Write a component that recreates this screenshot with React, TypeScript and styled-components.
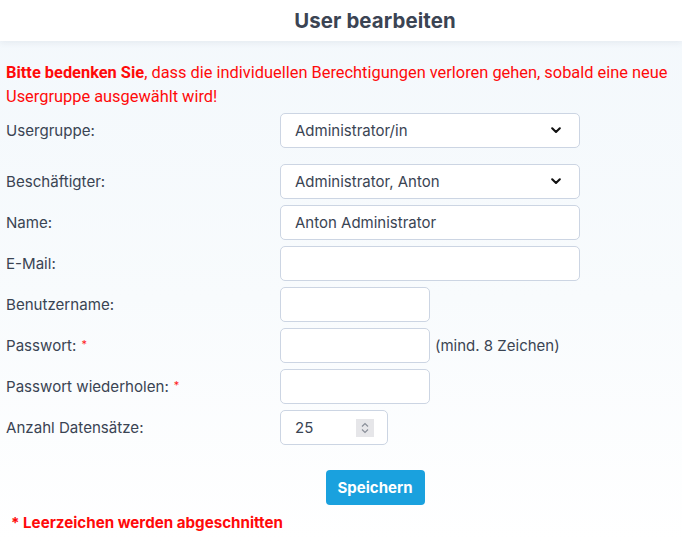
import React from "react";
import styled, { createGlobalStyle } from "styled-components";

const Global = createGlobalStyle`
  html, body { margin: 0; padding: 0; }
  body {
    font-family: Inter, "Noto Sans", sans-serif;
    background: #ffffff;
    width: 682px;
    height: 541px;
    overflow: hidden;
  }
`;

const Page = styled.div`
  width: 682px;
  min-height: 541px;
  background: linear-gradient(180deg, #f3f8fc 0%, #f8fbfd 55%, #ffffff 100%);
`;

const Header = styled.header`
  height: 41px;
  background: #ffffff;
  box-shadow: 0 2px 6px rgba(60, 80, 100, 0.08);
  display: flex;
  align-items: center;
  justify-content: center;
  padding-left: 68px;
  box-sizing: border-box;
`;

const Title = styled.h1`
  margin: 0;
  font-size: 20.4px;
  font-weight: 700;
  color: #3b4453;
  letter-spacing: 0.1px;
`;

const Content = styled.main`
  padding: 20px 6px 0 6px;
`;

const Warning = styled.p`
  margin: 0 0 4px 0;
  font-family: Roboto, sans-serif;
  font-size: 16.4px;
  line-height: 24px;
  color: #ff0a0a;
  strong { font-weight: 700; }
`;

const Form = styled.form`
  display: flex;
  flex-direction: column;
  gap: 6px;
`;

const Row = styled.div<{ $extra?: number }>`
  display: grid;
  grid-template-columns: 274px auto;
  align-items: center;
  margin-bottom: ${(p) => p.$extra ?? 0}px;
`;

const Label = styled.label`
  font-size: 15.1px;
  color: #3a4453;
  display: flex;
  align-items: center;
  gap: 5px;
`;

const Req = styled.span`
  color: #ff1a1a;
  font-size: 11px;
  position: relative;
  top: -2px;
`;

const Field = styled.div`
  display: flex;
  align-items: center;
  gap: 5px;
`;

const Input = styled.input<{ $w: number }>`
  width: ${(p) => p.$w}px;
  height: 35px;
  box-sizing: border-box;
  border: 1px solid #ccd5e3;
  border-radius: 5px;
  background: #ffffff;
  padding: 0 14px;
  font-family: Inter, sans-serif;
  font-size: 15px;
  color: #3a4453;
  outline: none;
`;

const SelectBox = styled.div`
  width: 300px;
  height: 35px;
  box-sizing: border-box;
  border: 1px solid #ccd5e3;
  border-radius: 5px;
  background: #ffffff;
  padding: 0 18px 0 14px;
  display: flex;
  align-items: center;
  justify-content: space-between;
  font-size: 15px;
  color: #3a4453;
`;

const Hint = styled.span`
  font-size: 15px;
  color: #3a4453;
`;

const NumberBox = styled.div`
  width: 108px;
  height: 35px;
  box-sizing: border-box;
  border: 1px solid #ccd5e3;
  border-radius: 5px;
  background: #ffffff;
  padding: 0 13px 0 14px;
  display: flex;
  align-items: center;
  justify-content: space-between;
  font-size: 15px;
  color: #3a4453;
`;

const Spinner = styled.span`
  width: 18px;
  height: 18px;
  background: #e6e6e9;
  display: flex;
  align-items: center;
  justify-content: center;
`;

const ButtonRow = styled.div`
  display: flex;
  justify-content: center;
  padding-left: 68px;
  margin-top: 19px;
`;

const Button = styled.button`
  width: 99px;
  height: 35px;
  border: none;
  border-radius: 4px;
  background: #1aa1de;
  color: #ffffff;
  font-family: Inter, sans-serif;
  font-weight: 700;
  font-size: 15px;
  cursor: pointer;
`;

const Footnote = styled.p`
  margin: 8px 0 0 5px;
  font-family: Inter, sans-serif;
  font-size: 15.15px;
  font-weight: 700;
  color: #ff0a0a;
`;

const Chevron = () => (
  <svg width="10" height="7" viewBox="0 0 10 7" fill="none">
    <path d="M1.2 1.3 L5 5 L8.8 1.3" stroke="#111" strokeWidth="2.1" strokeLinecap="round" strokeLinejoin="round" />
  </svg>
);

const SpinIcon = () => (
  <svg width="10" height="14" viewBox="0 0 10 14" fill="none">
    <path d="M2 5.5 L5 2.5 L8 5.5" stroke="#8a8f99" strokeWidth="1.2" />
    <path d="M2 8.5 L5 11.5 L8 8.5" stroke="#8a8f99" strokeWidth="1.2" />
  </svg>
);

export default function App() {
  return (
    <>
      <Global />
      <Page>
        <Header>
          <Title>User bearbeiten</Title>
        </Header>
        <Content>
          <Warning>
            <strong>Bitte bedenken Sie</strong>, dass die individuellen Berechtigungen verloren gehen, sobald eine neue Usergruppe ausgewählt wird!
          </Warning>
          <Form onSubmit={(e) => e.preventDefault()}>
            <Row $extra={10}>
              <Label>Usergruppe:</Label>
              <SelectBox>
                <span>Administrator/in</span>
                <Chevron />
              </SelectBox>
            </Row>
            <Row>
              <Label>Beschäftigter:</Label>
              <SelectBox>
                <span>Administrator, Anton</span>
                <Chevron />
              </SelectBox>
            </Row>
            <Row>
              <Label>Name:</Label>
              <Input $w={300} defaultValue="Anton Administrator" />
            </Row>
            <Row>
              <Label>E-Mail:</Label>
              <Input $w={300} />
            </Row>
            <Row>
              <Label>Benutzername:</Label>
              <Input $w={150} />
            </Row>
            <Row>
              <Label>
                Passwort:<Req>*</Req>
              </Label>
              <Field>
                <Input $w={150} type="password" />
                <Hint>(mind. 8 Zeichen)</Hint>
              </Field>
            </Row>
            <Row>
              <Label>
                Passwort wiederholen:<Req>*</Req>
              </Label>
              <Input $w={150} type="password" />
            </Row>
            <Row>
              <Label>Anzahl Datensätze:</Label>
              <NumberBox>
                <span>25</span>
                <Spinner>
                  <SpinIcon />
                </Spinner>
              </NumberBox>
            </Row>
            <ButtonRow>
              <Button type="submit">Speichern</Button>
            </ButtonRow>
          </Form>
          <Footnote>* Leerzeichen werden abgeschnitten</Footnote>
        </Content>
      </Page>
    </>
  );
}
